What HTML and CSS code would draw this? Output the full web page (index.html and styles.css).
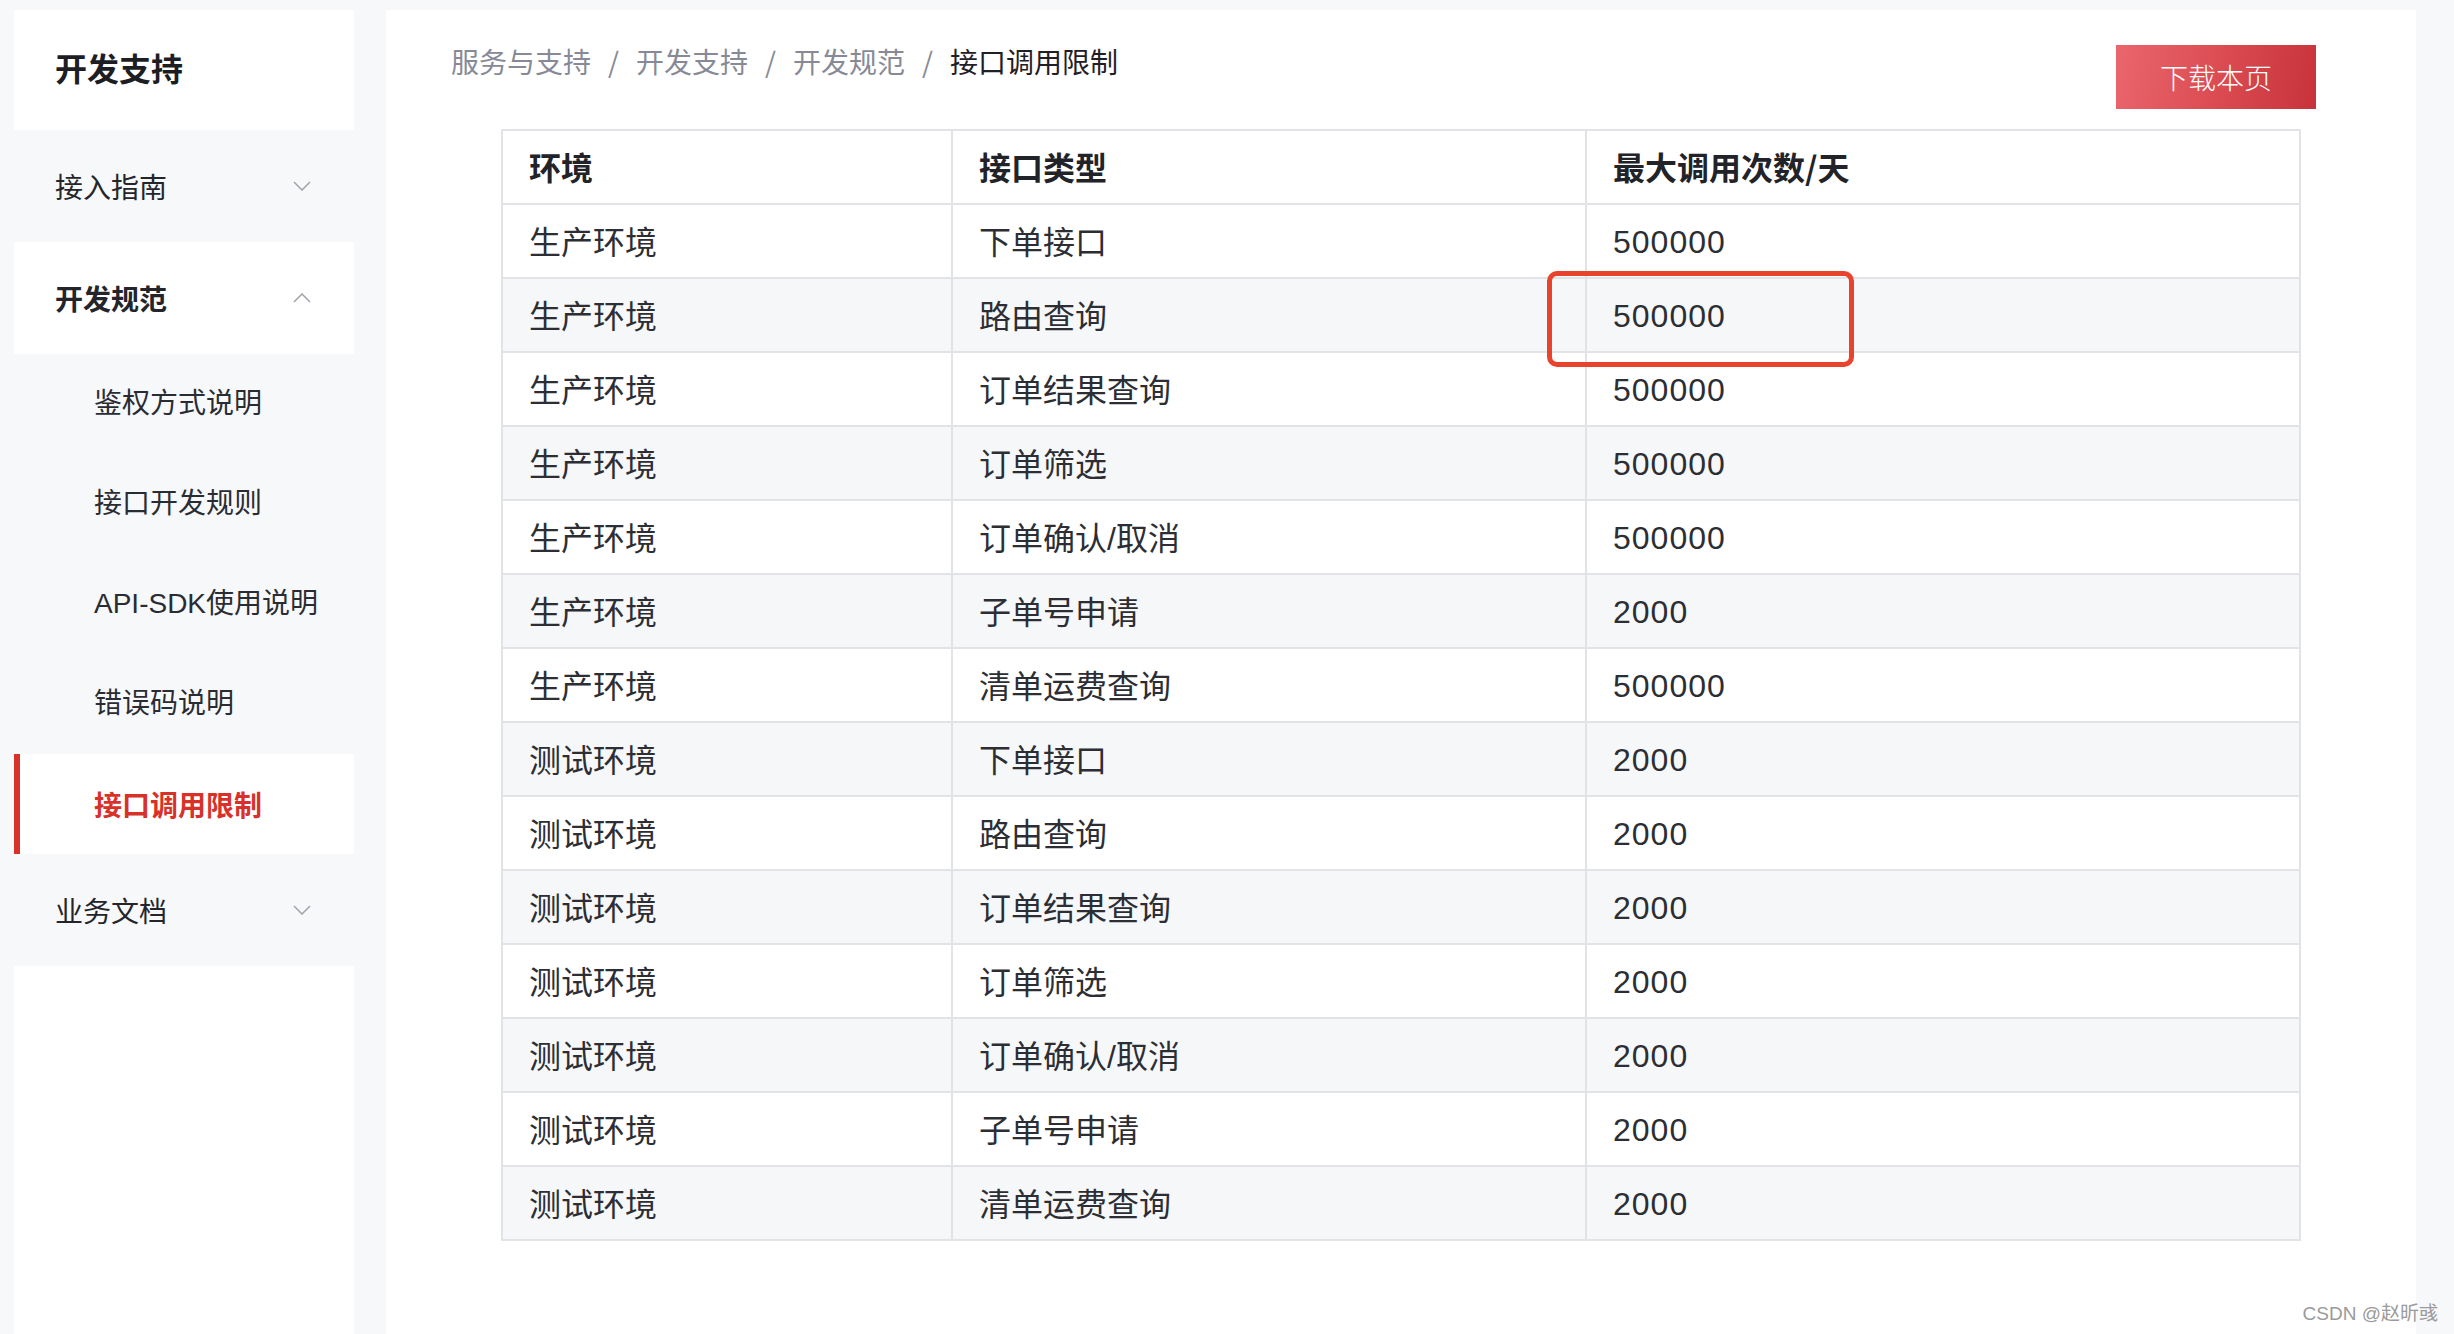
FILE: index.html
```html
<!DOCTYPE html>
<html lang="zh-CN">
<head>
<meta charset="utf-8">
<title>接口调用限制</title>
<link rel="stylesheet" href="styles.css">
</head>
<body>
<div class="layout">
  <aside class="sidebar">
    <div class="side-title">开发支持</div>
    <div class="side-group">
      <span>接入指南</span>
      <svg class="chev" width="18" height="10" viewBox="0 0 18 10"><path d="M1 1 L9 9 L17 1" fill="none" stroke="#a3a6ad" stroke-width="1.6"/></svg>
    </div>
    <div class="side-group open">
      <span>开发规范</span>
      <svg class="chev" width="18" height="10" viewBox="0 0 18 10"><path d="M1 9 L9 1 L17 9" fill="none" stroke="#a3a6ad" stroke-width="1.6"/></svg>
    </div>
    <div class="side-item">鉴权方式说明</div>
    <div class="side-item">接口开发规则</div>
    <div class="side-item">API-SDK使用说明</div>
    <div class="side-item">错误码说明</div>
    <div class="side-item active">接口调用限制</div>
    <div class="side-group">
      <span>业务文档</span>
      <svg class="chev" width="18" height="10" viewBox="0 0 18 10"><path d="M1 1 L9 9 L17 1" fill="none" stroke="#a3a6ad" stroke-width="1.6"/></svg>
    </div>
    <div class="side-fill"></div>
  </aside>
  <main class="panel">
    <div class="topbar">
      <nav class="breadcrumb">
        <span class="crumb">服务与支持</span><span class="sep">/</span><span class="crumb">开发支持</span><span class="sep">/</span><span class="crumb">开发规范</span><span class="sep">/</span><span class="crumb current">接口调用限制</span>
      </nav>
      <button class="download">下载本页</button>
    </div>
    <div class="table-wrap">
      <table class="limits">
        <colgroup><col class="c1"><col class="c2"><col class="c3"></colgroup>
        <thead>
          <tr><th>环境</th><th>接口类型</th><th>最大调用次数/天</th></tr>
        </thead>
        <tbody>
          <tr><td>生产环境</td><td>下单接口</td><td>500000</td></tr>
          <tr><td>生产环境</td><td>路由查询</td><td>500000</td></tr>
          <tr><td>生产环境</td><td>订单结果查询</td><td>500000</td></tr>
          <tr><td>生产环境</td><td>订单筛选</td><td>500000</td></tr>
          <tr><td>生产环境</td><td>订单确认/取消</td><td>500000</td></tr>
          <tr><td>生产环境</td><td>子单号申请</td><td>2000</td></tr>
          <tr><td>生产环境</td><td>清单运费查询</td><td>500000</td></tr>
          <tr><td>测试环境</td><td>下单接口</td><td>2000</td></tr>
          <tr><td>测试环境</td><td>路由查询</td><td>2000</td></tr>
          <tr><td>测试环境</td><td>订单结果查询</td><td>2000</td></tr>
          <tr><td>测试环境</td><td>订单筛选</td><td>2000</td></tr>
          <tr><td>测试环境</td><td>订单确认/取消</td><td>2000</td></tr>
          <tr><td>测试环境</td><td>子单号申请</td><td>2000</td></tr>
          <tr><td>测试环境</td><td>清单运费查询</td><td>2000</td></tr>
        </tbody>
      </table>
      <div class="highlight"></div>
    </div>
  </main>
  <div class="watermark">CSDN @赵昕彧</div>
</div>
</body>
</html>
```

FILE: styles.css
```css
* { box-sizing: border-box; }
html, body {
  margin: 0;
  padding: 0;
}
body {
  background: #f7f8fa;
  font-family: "Noto Sans CJK SC", "Noto Sans", sans-serif;
  color: #22242a;
}
.layout {
  position: relative;
  display: flex;
  align-items: stretch;
  height: 100vh;
  overflow: hidden;
  padding: 10px 40px 0 14px;
  gap: 32px;
}
.sidebar {
  width: 340px;
  flex: 0 0 340px;
  display: flex;
  flex-direction: column;
}
.side-title {
  height: 120px;
  line-height: 114px;
  background: #fff;
  padding-left: 41px;
  font-size: 32px;
  font-weight: 700;
  color: #1d1e24;
}
.side-group {
  height: 112px;
  display: flex;
  align-items: center;
  justify-content: space-between;
  padding: 0 43px 0 41px;
  font-size: 28px;
  color: #23252b;
}
.side-group.open {
  background: #fff;
  font-weight: 700;
}
.side-item {
  height: 100px;
  line-height: 100px;
  padding-left: 80px;
  font-size: 28px;
  color: #2a2c33;
  font-family: "Liberation Sans", "Noto Sans CJK SC", sans-serif;
}
.side-item.active {
  background: #fff;
  border-left: 6px solid #d8312a;
  padding-left: 74px;
  color: #d8312a;
  font-weight: 700;
  font-family: "Noto Sans CJK SC", sans-serif;
}
.side-fill {
  flex: 1;
  background: #fff;
}
.panel {
  flex: 1;
  background: #fff;
  padding: 31px 100px 40px 65px;
}
.topbar {
  display: flex;
  justify-content: space-between;
  align-items: flex-start;
}
.breadcrumb {
  font-size: 28px;
  line-height: 40px;
  color: #878a96;
}
.sep {
  margin: 0 17px;
  color: #878a96;
}
.crumb.current {
  color: #1f2026;
}
.download {
  margin-top: 4px;
  width: 200px;
  height: 64px;
  border: none;
  background: linear-gradient(100deg, #ea666d 0%, #dc4c53 50%, #c7333a 100%);
  color: #fff;
  font-family: "Noto Sans CJK SC", sans-serif;
  font-size: 28px;
  font-weight: 300;
  padding: 0;
}
.table-wrap {
  position: relative;
  margin: 20px 15px 0 50px;
}
.limits {
  width: 100%;
  border-collapse: collapse;
  table-layout: fixed;
  font-family: "Liberation Sans", "Noto Sans CJK SC", sans-serif;
  font-size: 32px;
  color: #2c2e34;
}
.limits col.c1 { width: 450px; }
.limits col.c2 { width: 634px; }
.limits col.c3 { width: 714px; }
.limits th, .limits td {
  border: 2px solid #e1e3e7;
  height: 74px;
  padding: 0 26px 2px;
  text-align: left;
  vertical-align: middle;
  font-weight: 400;
}
.limits td:nth-child(3) {
  letter-spacing: 1px;
  padding: 2px 26px 0;
}
.limits th {
  font-weight: 700;
  color: #222328;
  font-family: "Noto Sans CJK SC", sans-serif;
}
.limits tbody tr:nth-child(even) td {
  background: #f6f7f9;
}
.highlight {
  position: absolute;
  left: 1046px;
  top: 142px;
  width: 307px;
  height: 96px;
  border: 5px solid #e8432c;
  border-radius: 10px;
}
.watermark {
  position: absolute;
  right: 16px;
  bottom: 8px;
  font-family: "Liberation Sans", "Noto Sans CJK SC", sans-serif;
  font-size: 19px;
  line-height: 24px;
  color: #9a9a9a;
}
```
